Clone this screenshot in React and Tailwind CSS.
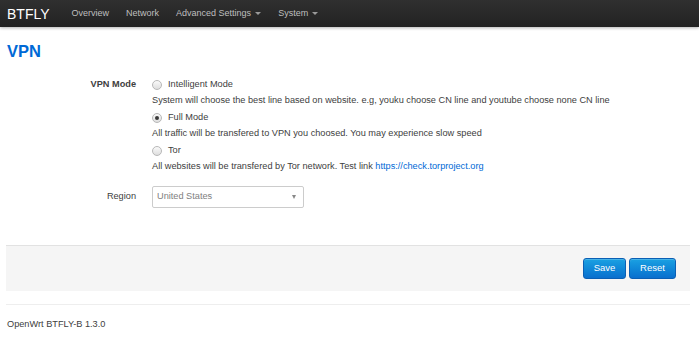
import React, { useState } from 'react';

function Radio({ checked }) {
  return (
    <span className="inline-flex h-[10px] w-[10px] shrink-0 items-center justify-center rounded-full border border-[#b8b8b8] bg-gradient-to-b from-[#fafafa] to-[#dedede]">
      {checked && <span className="h-[4px] w-[4px] rounded-full bg-[#3a3a3a]" />}
    </span>
  );
}

function Caret() {
  return <span className="ml-[4px] inline-block h-0 w-0 border-x-[3px] border-t-[3px] border-x-transparent border-t-[#9a9a9a] align-middle" />;
}

function App() {
  const [mode, setMode] = useState('full');

  const modes = [
    {
      id: 'intelligent',
      name: 'Intelligent Mode',
      desc: 'System will choose the best line based on website. e.g, youku choose CN line and youtube choose none CN line'
    },
    {
      id: 'full',
      name: 'Full Mode',
      desc: 'All traffic will be transfered to VPN you choosed. You may experience slow speed'
    },
    { id: 'tor', name: 'Tor', desc: 'All websites will be transfered by Tor network. Test link ' }
  ];

  return (
    <div className="min-h-screen bg-white font-[family-name:Liberation_Sans,Arial,sans-serif] text-[9.2px] text-[#404040]">
      <header className="flex h-[27px] items-center bg-gradient-to-b from-[#303030] to-[#222] pl-[7px] shadow-[0_1px_3px_rgba(0,0,0,0.3)]">
        <span className="mr-[22px] text-[14px] leading-none text-white">BTFLY</span>
        <nav className="flex items-center gap-[17px] text-[9px] text-[#bfbfbf]">
          <span>Overview</span>
          <span>Network</span>
          <span>Advanced Settings<Caret /></span>
          <span>System<Caret /></span>
        </nav>
      </header>

      <main className="pl-[6px] pr-[9px]">
        <h1 className="mt-[14px] pl-[1px] text-[16.5px] font-bold leading-[20px] text-[#0069d6]">VPN</h1>

        <div className="mt-[16px] flex">
          <div className="flex h-[16px] w-[130px] shrink-0 items-center justify-end font-bold">VPN Mode</div>
          <div className="ml-[16px] flex flex-col">
            {modes.map((m) => (
              <div key={m.id} className="mb-[2px]">
                <label className="flex h-[16px] items-center gap-[6px]" onClick={() => setMode(m.id)}>
                  <Radio checked={mode === m.id} />
                  <span>{m.name}</span>
                </label>
                <p className="leading-[15px]">
                  {m.desc}
                  {m.id === 'tor' && <span className="text-[#0069d6]">https://check.torproject.org</span>}
                </p>
              </div>
            ))}
          </div>
        </div>

        <div className="mt-[10px] flex items-center">
          <div className="w-[130px] shrink-0 text-right">Region</div>
          <div className="ml-[16px] flex h-[22px] w-[152px] items-center justify-between rounded-[2px] border border-[#ccc] pl-[4px] pr-[7px] text-[#808080]">
            <span>United States</span>
            <span className="h-0 w-0 border-x-[2.5px] border-t-[4px] border-x-transparent border-t-[#888]" />
          </div>
        </div>

        <div className="mt-[37px] flex h-[46px] items-center justify-end gap-[3px] border-t border-[#e2e2e2] bg-[#f5f5f5] pr-[14px]">
          <button className="h-[21px] w-[43px] rounded-[3px] border border-[#0a5fb4] bg-gradient-to-b from-[#1ba1e2] to-[#0a6fce] text-[9.5px] text-white shadow-[inset_0_1px_0_rgba(255,255,255,0.2)]">
            Save
          </button>
          <button className="h-[21px] w-[47px] rounded-[3px] border border-[#0a5fb4] bg-gradient-to-b from-[#1ba1e2] to-[#0a6fce] text-[9.5px] text-white shadow-[inset_0_1px_0_rgba(255,255,255,0.2)]">
            Reset
          </button>
        </div>

        <footer className="mt-[13px] border-t border-[#eee] pt-[12px] pl-[1px] leading-[15px]">
          OpenWrt BTFLY-B 1.3.0
        </footer>
      </main>
    </div>
  );
}

export default App;
